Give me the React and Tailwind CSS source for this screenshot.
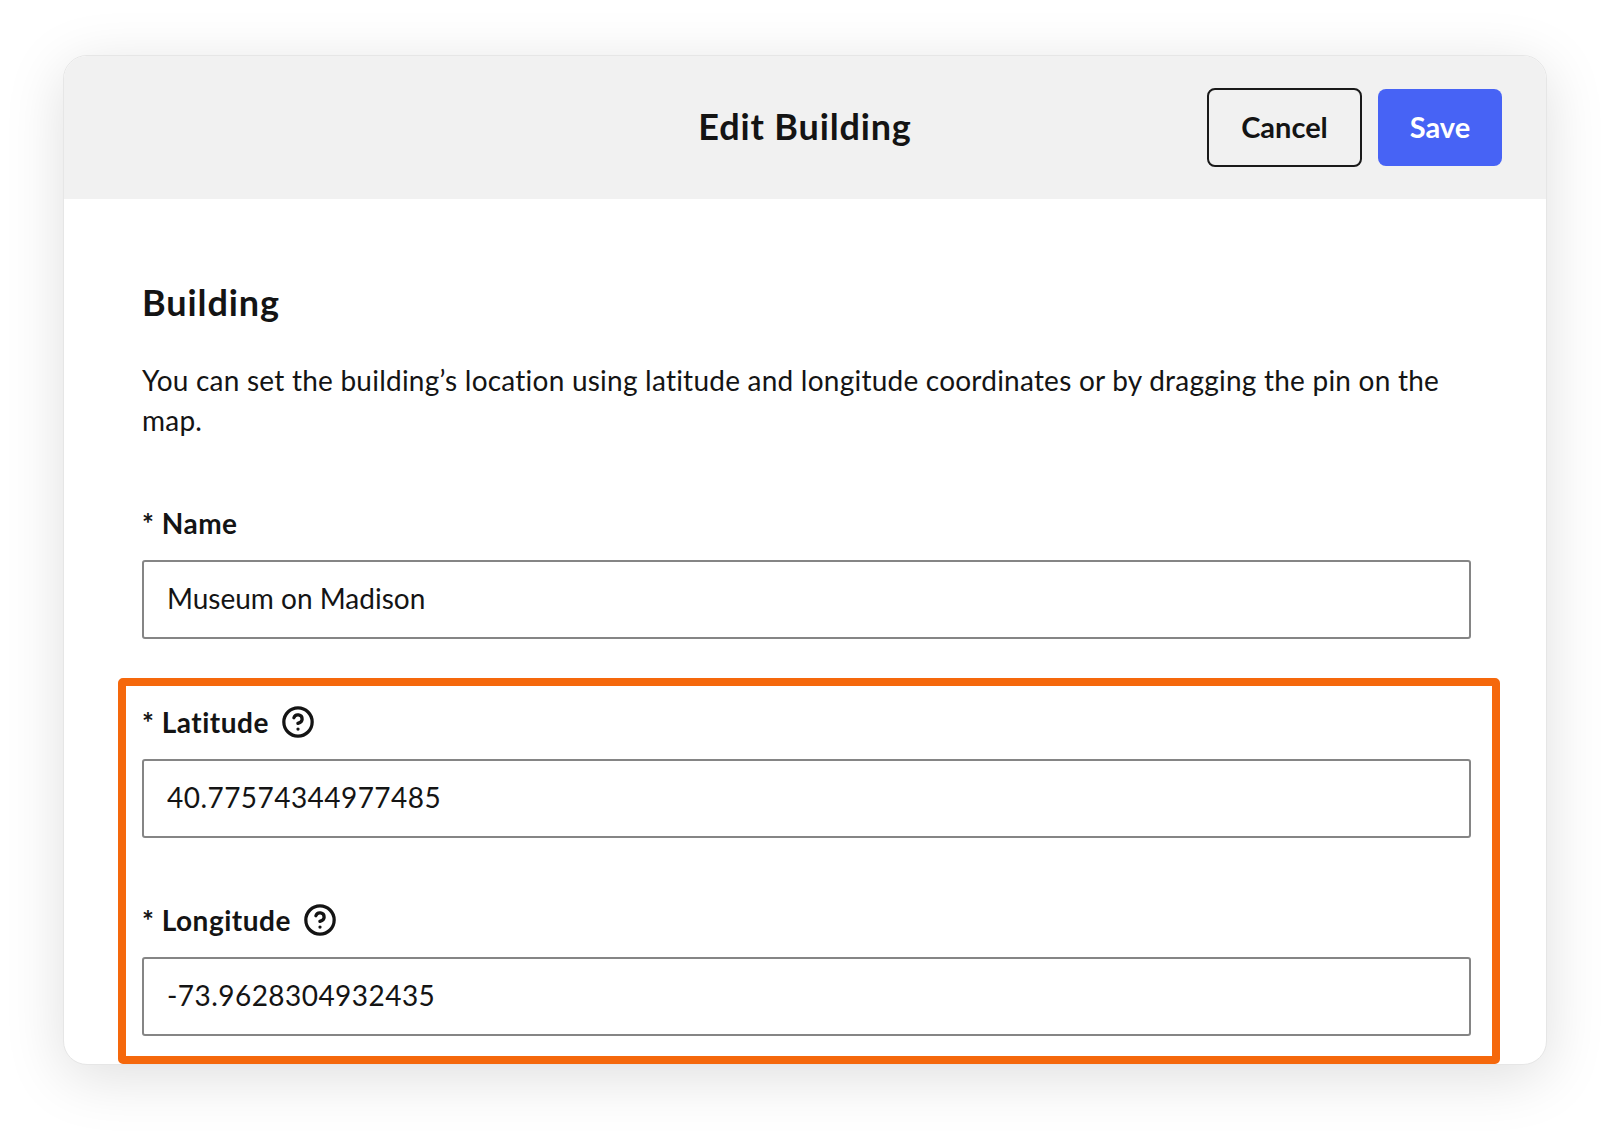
import React from 'react';
import { CircleHelp } from 'lucide-react';

const Field = ({ label, value, help, numeric, className }) => (
  <div className={className}>
    <div className="flex h-10 items-center text-[28px] font-bold tracking-[0.5px] text-[#141414]">
      <span>* {label}</span>
      {help && (
        <CircleHelp className="ml-[12px] h-[34px] w-[34px] text-[#141414]" strokeWidth={2.3} />
      )}
    </div>
    <input
      readOnly
      value={value}
      className={`mt-[17px] block h-[79px] w-full rounded-[3px] border-2 border-[#858585] bg-white px-[23px] pb-[3px] text-[28px] text-[#141414] outline-none ${numeric ? 'tracking-[0.45px]' : 'tracking-[0px]'}`}
    />
  </div>
);

const App = () => {
  return (
    <div className="h-[1136px] w-[1610px] overflow-hidden bg-white pl-[63px] pt-[55px] font-['Lato',sans-serif] [font-variant-ligatures:none]">
      <div className="relative h-[1010px] w-[1484px] overflow-hidden rounded-[24px] border border-[#e6e6e6] bg-white shadow-[0_12px_60px_rgba(0,0,0,0.13)]">
        <div className="relative flex h-[143px] items-center justify-center bg-[#f1f1f1] pb-[3px]">
          <h1 className="text-[36px] font-bold tracking-[0.85px] text-[#141414]">Edit Building</h1>
          <div className="absolute right-[44px] top-[32px] flex items-center gap-[16px]">
            <button className="h-[79px] w-[155px] rounded-[8px] border-2 border-[#1a1a1a] pb-[2px] text-[29px] font-bold text-[#141414]">
              Cancel
            </button>
            <button className="h-[77px] w-[124px] rounded-[8px] bg-[#4763f5] pb-[2px] text-[29px] font-bold text-white">
              Save
            </button>
          </div>
        </div>

        <div className="pl-[78px] pr-[75px] pt-[83px]">
          <h2 className="h-10 text-[36px] font-bold leading-10 tracking-[0.9px] text-[#141414]">Building</h2>
          <p className="mt-[38px] text-[28px] leading-10 tracking-[0.23px] text-[#141414]">
            You can set the building’s location using latitude and longitude coordinates or by dragging the pin on the map.
          </p>
          <Field label="Name" value="Museum on Madison" className="mt-[63px]" />
          <Field label="Latitude" value="40.77574344977485" help numeric className="mt-[63px]" />
          <Field label="Longitude" value="-73.9628304932435" help numeric className="mt-[62px]" />
        </div>

        <div className="absolute bottom-0 left-[54px] h-[386px] w-[1382px] rounded-[5px] border-8 border-[#f5680c]" />
      </div>
    </div>
  );
};

export default App;
